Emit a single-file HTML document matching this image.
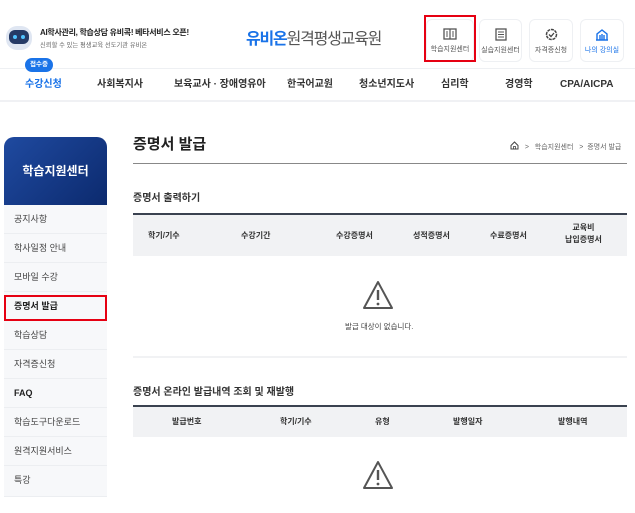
<!DOCTYPE html>
<html><head><meta charset="utf-8"><style>
*{margin:0;padding:0;box-sizing:border-box}
body{width:635px;height:513px;background:#fff;font-family:"Liberation Sans","Noto Sans CJK KR",sans-serif;position:relative;overflow:hidden;color:#222}
.a{position:absolute;white-space:nowrap}
.btn{position:absolute;top:19px;height:43px;border:1px solid #eef0f3;border-radius:6px;text-align:center;font-size:7px;color:#555}
.btn svg{display:block;margin:8px auto 4px}
.nav{font-size:10px;font-weight:bold;color:#333;top:79px;line-height:12px}
.side{position:absolute;left:4px;width:103px;height:29px;background:#f7f8fa;border-bottom:1px solid #eceef1;font-size:9px;color:#444;padding-left:10px;line-height:29px}
.th{font-size:8px;font-weight:bold;color:#333;text-align:center;line-height:12px}
</style></head><body>
<!-- robot -->
<div class="a" style="left:6px;top:26px;width:26px;height:24px;background:#dfe6f2;border-radius:11px"></div>
<div class="a" style="left:9px;top:30px;width:20px;height:14px;background:#253a66;border-radius:6px"></div>
<div class="a" style="left:13px;top:35px;width:4px;height:4px;background:#4fc3ff;border-radius:2px"></div>
<div class="a" style="left:21px;top:35px;width:4px;height:4px;background:#4fc3ff;border-radius:2px"></div>
<div class="a" style="left:40px;top:28px;font-size:8px;line-height:10px;font-weight:bold;color:#222;letter-spacing:-0.3px">AI학사관리, 학습상담 유비콕! 베타서비스 오픈!</div>
<div class="a" style="left:40px;top:42px;font-size:6.3px;line-height:8px;color:#666">신뢰할 수 있는 평생교육 선도기관 유비온</div>
<div class="a" style="left:246px;top:30px;font-size:16px;line-height:20px;font-weight:bold;color:#555;letter-spacing:-1.2px"><span style="color:#1a73e8">유비온</span><span style="font-weight:normal">원격평생교육원</span></div>
<!-- buttons -->
<div class="btn" style="left:426px;width:48px"><svg width="14" height="12" viewBox="0 0 14 12"><rect x="1" y="1" width="12" height="10" fill="none" stroke="#555" stroke-width="1.3"/><line x1="7" y1="1" x2="7" y2="11" stroke="#555" stroke-width="1.2"/><path d="M3 4h2M3 6h2M3 8h2M9 4h2M9 6h2M9 8h2" stroke="#555"/></svg>학습지원센터</div>
<div class="a" style="left:424px;top:15px;width:52px;height:47px;border:2.5px solid #e60012"></div>
<div class="btn" style="left:479px;width:43px"><svg width="12" height="13" viewBox="0 0 12 13"><rect x="1" y="1" width="10" height="11" fill="none" stroke="#555" stroke-width="1.3"/><path d="M3 4h6M3 6.5h6M3 9h6" stroke="#555"/></svg>실습지원센터</div>
<div class="btn" style="left:529px;width:44px"><svg width="13" height="13" viewBox="0 0 13 13"><circle cx="6.5" cy="6.5" r="5" fill="none" stroke="#444" stroke-width="1.5" stroke-dasharray="3 0.8"/><path d="M4 6.5l2 2 3-3.5" fill="none" stroke="#444" stroke-width="1.3"/></svg>자격증신청</div>
<div class="btn" style="left:580px;width:44px;color:#1a73e8"><svg width="14" height="13" viewBox="0 0 14 13"><path d="M1 12h12M2 12V6l5-4 5 4v6M5 12V7M9 12V7M7 12V6" fill="none" stroke="#1a73e8" stroke-width="1.4"/></svg>나의 강의실</div>
<!-- nav -->
<div class="a" style="left:0;top:68px;width:635px;height:1px;background:#eef0f3"></div>
<div class="a" style="left:25px;top:58px;width:28px;height:14px;background:#1a73e8;border-radius:7px;color:#fff;font-size:6.5px;font-weight:bold;text-align:center;line-height:14px">접수중</div>
<div class="a nav" style="left:25px;color:#1a73e8">수강신청</div>
<div class="a nav" style="left:97px">사회복지사</div>
<div class="a nav" style="left:174px">보육교사 · 장애영유아</div>
<div class="a nav" style="left:287px">한국어교원</div>
<div class="a nav" style="left:359px">청소년지도사</div>
<div class="a nav" style="left:441px">심리학</div>
<div class="a nav" style="left:505px">경영학</div>
<div class="a nav" style="left:560px">CPA/AICPA</div>
<div class="a" style="left:0;top:100px;width:635px;height:2px;background:#f0f1f4"></div>
<!-- sidebar -->
<div class="a" style="left:4px;top:137px;width:103px;height:68px;border-radius:10px 10px 0 0;background:linear-gradient(135deg,#1f4aa0,#0c2a6e);color:#fff;font-size:12px;font-weight:bold;text-align:center;line-height:68px">학습지원센터</div>
<div class="side" style="top:205px">공지사항</div>
<div class="side" style="top:234px">학사일정 안내</div>
<div class="side" style="top:263px">모바일 수강</div>
<div class="side" style="top:292px;font-weight:bold;color:#222">증명서 발급</div>
<div class="a" style="left:4px;top:295px;width:103px;height:26px;border:2.5px solid #e60012"></div>
<div class="side" style="top:321px">학습상담</div>
<div class="side" style="top:350px">자격증신청</div>
<div class="side" style="top:379px;font-weight:bold;color:#222">FAQ</div>
<div class="side" style="top:408px">학습도구다운로드</div>
<div class="side" style="top:437px">원격지원서비스</div>
<div class="side" style="top:466px;height:31px">특강</div>
<!-- main -->
<div class="a" style="left:133px;top:135px;font-size:15px;line-height:20px;font-weight:bold;color:#222">증명서 발급</div>
<div class="a" style="left:510px;top:141px;font-size:7px;color:#666"><svg width="9" height="9" viewBox="0 0 9 9" style="vertical-align:-1px"><path d="M1 4.5L4.5 1 8 4.5V8H1z" fill="none" stroke="#444"/><rect x="3.5" y="5.5" width="2" height="2.5" fill="none" stroke="#444" stroke-width=".8"/></svg>&nbsp;&nbsp;&nbsp;&gt;&nbsp;&nbsp;&nbsp;학습지원센터&nbsp;&nbsp;&nbsp;&gt;&nbsp;&nbsp;증명서 발급</div>
<div class="a" style="left:133px;top:163px;width:494px;height:1px;background:#888"></div>
<div class="a" style="left:133px;top:193px;font-size:10px;line-height:12px;font-weight:bold;color:#333">증명서 출력하기</div>
<div class="a" style="left:133px;top:213px;width:494px;height:43px;background:#f1f2f4;border-top:2px solid #3a4250"></div>
<div class="a th" style="left:148px;top:230px">학기/기수</div>
<div class="a th" style="left:241px;top:230px">수강기간</div>
<div class="a th" style="left:336px;top:230px">수강증명서</div>
<div class="a th" style="left:413px;top:230px">성적증명서</div>
<div class="a th" style="left:490px;top:230px">수료증명서</div>
<div class="a th" style="left:565px;top:222px">교육비<br>납입증명서</div>
<svg class="a" style="left:362px;top:280px" width="32" height="30" viewBox="0 0 32 30"><path d="M16 2L30 28H2z" fill="none" stroke="#555" stroke-width="2" stroke-linejoin="round"/><path d="M16 10v10" stroke="#555" stroke-width="2.4"/><circle cx="16" cy="24" r="1.4" fill="#555"/></svg>
<div class="a" style="left:345px;top:321px;font-size:7.5px;color:#444">발급 대상이 없습니다.</div>
<div class="a" style="left:133px;top:356px;width:494px;height:2px;background:#f1f2f4"></div>
<div class="a" style="left:133px;top:387px;font-size:10px;line-height:12px;font-weight:bold;color:#333">증명서 온라인 발급내역 조회 및 재발행</div>
<div class="a" style="left:133px;top:405px;width:494px;height:32px;background:#f1f2f4;border-top:2px solid #3a4250"></div>
<div class="a th" style="left:172px;top:416px">발급번호</div>
<div class="a th" style="left:280px;top:416px">학기/기수</div>
<div class="a th" style="left:375px;top:416px">유형</div>
<div class="a th" style="left:453px;top:416px">발행일자</div>
<div class="a th" style="left:558px;top:416px">발행내역</div>
<svg class="a" style="left:362px;top:460px" width="32" height="30" viewBox="0 0 32 30"><path d="M16 2L30 28H2z" fill="none" stroke="#555" stroke-width="2" stroke-linejoin="round"/><path d="M16 10v10" stroke="#555" stroke-width="2.4"/><circle cx="16" cy="24" r="1.4" fill="#555"/></svg>
</body></html>
